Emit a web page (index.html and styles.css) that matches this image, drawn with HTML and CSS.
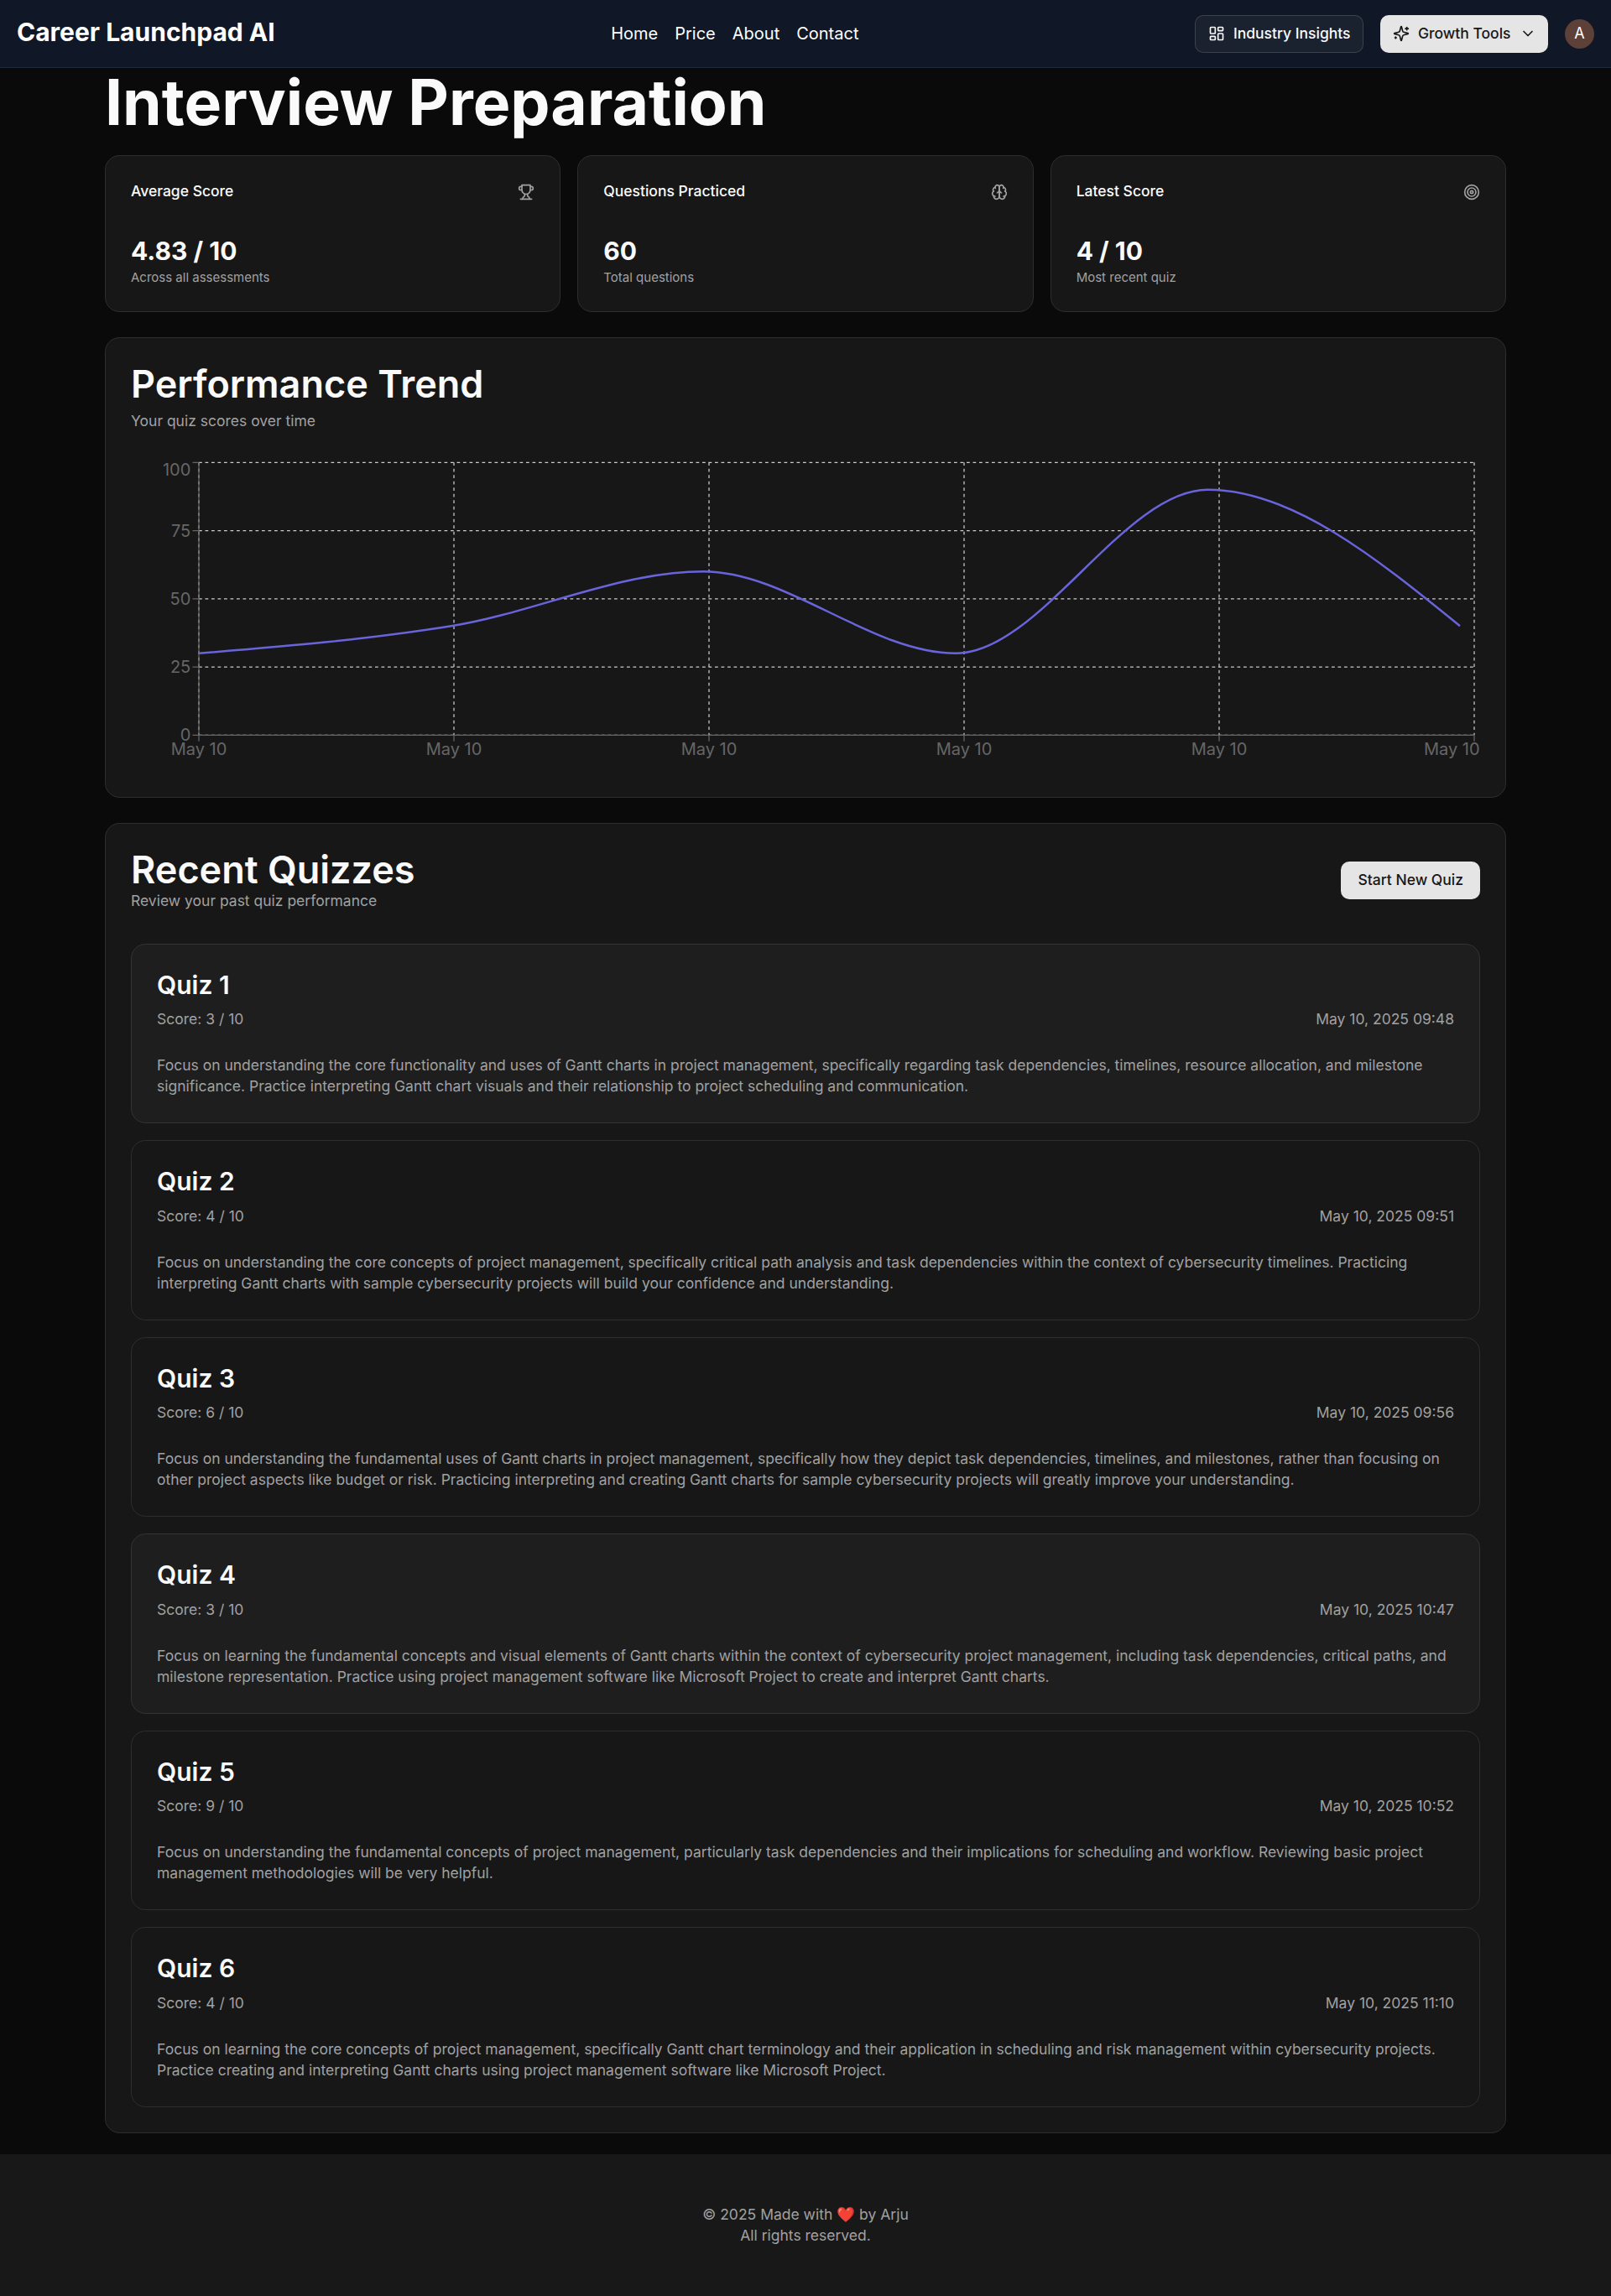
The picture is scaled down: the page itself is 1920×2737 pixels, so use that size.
FILE: index.html
```html
<!DOCTYPE html>
<html lang="en">
<head>
<meta charset="utf-8">
<title>Career Launchpad AI</title>
<link rel="stylesheet" href="styles.css">
</head>
<body>
<header class="topbar">
  <a class="brand">Career Launchpad AI</a>
  <nav class="links"><a>Home</a><a>Price</a><a>About</a><a>Contact</a></nav>
  <div class="actions">
    <button class="btn btn-outline">
      <svg class="icon" viewBox="0 0 24 24"><rect width="7" height="9" x="3" y="3" rx="1"/><rect width="7" height="5" x="14" y="3" rx="1"/><rect width="7" height="9" x="14" y="12" rx="1"/><rect width="7" height="5" x="3" y="16" rx="1"/></svg>
      <span>Industry Insights</span>
    </button>
    <button class="btn btn-primary btn-icon">
      <svg class="icon" viewBox="0 0 24 24"><path d="M9.937 15.5A2 2 0 0 0 8.5 14.063l-6.135-1.582a.5.5 0 0 1 0-.962L8.5 9.936A2 2 0 0 0 9.937 8.5l1.582-6.135a.5.5 0 0 1 .963 0L14.063 8.5A2 2 0 0 0 15.5 9.937l6.135 1.581a.5.5 0 0 1 0 .964L15.5 14.063a2 2 0 0 0-1.437 1.437l-1.582 6.135a.5.5 0 0 1-.963 0z"/><path d="M20 3v4"/><path d="M22 5h-4"/><path d="M4 17v2"/><path d="M5 18H3"/></svg>
      <span>Growth Tools</span>
      <svg class="icon" viewBox="0 0 24 24"><path d="m6 9 6 6 6-6"/></svg>
    </button>
    <span class="avatar">A</span>
  </div>
</header>

<main class="page">
  <h1 class="page-title">Interview Preparation</h1>

  <section class="stats">
    <article class="card">
      <div class="stat-head"><h3 class="stat-label">Average Score</h3>
        <svg class="icon" viewBox="0 0 24 24"><path d="M6 9H4.5a2.5 2.5 0 0 1 0-5H6"/><path d="M18 9h1.5a2.5 2.5 0 0 0 0-5H18"/><path d="M4 22h16"/><path d="M10 14.66V17c0 .55-.47.98-.97 1.21C7.85 18.75 7 20.24 7 22"/><path d="M14 14.66V17c0 .55.47.98.97 1.21C16.15 18.75 17 20.24 17 22"/><path d="M18 2H6v7a6 6 0 0 0 12 0V2Z"/></svg></div>
      <div><div class="stat-value">4.83 / 10</div><p class="stat-note">Across all assessments</p></div>
    </article>
    <article class="card">
      <div class="stat-head"><h3 class="stat-label">Questions Practiced</h3>
        <svg class="icon" viewBox="0 0 24 24"><path d="M12 5a3 3 0 1 0-5.997.125 4 4 0 0 0-2.526 5.77 4 4 0 0 0 .556 6.588A4 4 0 1 0 12 18Z"/><path d="M12 5a3 3 0 1 1 5.997.125 4 4 0 0 1 2.526 5.77 4 4 0 0 1-.556 6.588A4 4 0 1 1 12 18Z"/><path d="M15 13a4.5 4.5 0 0 1-3-4 4.5 4.5 0 0 1-3 4"/><path d="M17.599 6.5a3 3 0 0 0 .399-1.375"/><path d="M6.003 5.125A3 3 0 0 0 6.401 6.5"/><path d="M3.477 10.896a4 4 0 0 1 .585-.396"/><path d="M19.938 10.5a4 4 0 0 1 .585.396"/><path d="M6 18a4 4 0 0 1-1.967-.516"/><path d="M19.967 17.484A4 4 0 0 1 18 18"/></svg></div>
      <div><div class="stat-value">60</div><p class="stat-note">Total questions</p></div>
    </article>
    <article class="card">
      <div class="stat-head"><h3 class="stat-label">Latest Score</h3>
        <svg class="icon" viewBox="0 0 24 24"><circle cx="12" cy="12" r="10"/><circle cx="12" cy="12" r="6"/><circle cx="12" cy="12" r="2"/></svg></div>
      <div><div class="stat-value">4 / 10</div><p class="stat-note">Most recent quiz</p></div>
    </article>
  </section>

  <section class="card">
    <div class="card-head">
      <h2 class="card-title">Performance Trend</h2>
      <p class="muted">Your quiz scores over time</p>
    </div>
    <svg class="chart" viewBox="0 0 1608 375">
      <g class="grid">
        <path d="M81 331.25H1601M81 250H1601M81 168.75H1601M81 87.5H1601M81 6.25H1601"/>
        <path d="M81 6.25V331.25"/><path d="M385 6.25V331.25"/><path d="M689 6.25V331.25"/><path d="M993 6.25V331.25"/><path d="M1297 6.25V331.25"/><path d="M1601 6.25V331.25"/>
      </g>
      <g class="axis">
        <path d="M81 331.25H1601M81 331.25v7.5M385 331.25v7.5M689 331.25v7.5M993 331.25v7.5M1297 331.25v7.5M1601 331.25v7.5"/>
        <path d="M81 6.25V331.25M73.5 331.25h7.5M73.5 250h7.5M73.5 168.75h7.5M73.5 87.5h7.5M73.5 6.25h7.5"/>
      </g>
      <g class="tick tick-x">
        <text x="81" y="354.9">May 10</text><text x="385" y="354.9">May 10</text><text x="689" y="354.9">May 10</text><text x="993" y="354.9">May 10</text><text x="1297" y="354.9">May 10</text><text x="1574.3" y="354.9">May 10</text>
      </g>
      <g class="tick tick-y">
        <text x="71.25" y="337.9">0</text><text x="71.25" y="257.1">25</text><text x="71.25" y="175.9">50</text><text x="71.25" y="94.6">75</text><text x="71.25" y="21.8">100</text>
      </g>
      <path class="line" d="M81.25 233.75C181.43 225.63 281.62 217.5 381.8 201.25C481.98 185 582.17 136.25 682.35 136.25C782.53 136.25 882.72 233.75 982.9 233.75C1083.08 233.75 1183.27 38.75 1283.45 38.75C1383.63 38.75 1483.82 120 1584 201.25"/>
    </svg>
  </section>

  <section class="card recent">
    <div class="recent-head">
      <div><h2 class="card-title">Recent Quizzes</h2><p class="muted">Review your past quiz performance</p></div>
      <button class="btn btn-primary"><span>Start New Quiz</span></button>
    </div>
    <div class="quiz-list">
      <article class="card quiz active">
        <div class="quiz-head"><h3 class="quiz-title">Quiz 1</h3><div class="quiz-meta"><span>Score: 3 / 10</span><span>May 10, 2025 09:48</span></div></div>
        <p class="muted">Focus on understanding the core functionality and uses of Gantt charts in project management, specifically regarding task dependencies, timelines, resource allocation, and milestone significance. Practice interpreting Gantt chart visuals and their relationship to project scheduling and communication.</p>
      </article>
      <article class="card quiz">
        <div class="quiz-head"><h3 class="quiz-title">Quiz 2</h3><div class="quiz-meta"><span>Score: 4 / 10</span><span>May 10, 2025 09:51</span></div></div>
        <p class="muted">Focus on understanding the core concepts of project management, specifically critical path analysis and task dependencies within the context of cybersecurity timelines. Practicing interpreting Gantt charts with sample cybersecurity projects will build your confidence and understanding.</p>
      </article>
      <article class="card quiz">
        <div class="quiz-head"><h3 class="quiz-title">Quiz 3</h3><div class="quiz-meta"><span>Score: 6 / 10</span><span>May 10, 2025 09:56</span></div></div>
        <p class="muted">Focus on understanding the fundamental uses of Gantt charts in project management, specifically how they depict task dependencies, timelines, and milestones, rather than focusing on other project aspects like budget or risk. Practicing interpreting and creating Gantt charts for sample cybersecurity projects will greatly improve your understanding.</p>
      </article>
      <article class="card quiz active">
        <div class="quiz-head"><h3 class="quiz-title">Quiz 4</h3><div class="quiz-meta"><span>Score: 3 / 10</span><span>May 10, 2025 10:47</span></div></div>
        <p class="muted">Focus on learning the fundamental concepts and visual elements of Gantt charts within the context of cybersecurity project management, including task dependencies, critical paths, and milestone representation. Practice using project management software like Microsoft Project to create and interpret Gantt charts.</p>
      </article>
      <article class="card quiz">
        <div class="quiz-head"><h3 class="quiz-title">Quiz 5</h3><div class="quiz-meta"><span>Score: 9 / 10</span><span>May 10, 2025 10:52</span></div></div>
        <p class="muted">Focus on understanding the fundamental concepts of project management, particularly task dependencies and their implications for scheduling and workflow. Reviewing basic project management methodologies will be very helpful.</p>
      </article>
      <article class="card quiz">
        <div class="quiz-head"><h3 class="quiz-title">Quiz 6</h3><div class="quiz-meta"><span>Score: 4 / 10</span><span>May 10, 2025 11:10</span></div></div>
        <p class="muted">Focus on learning the core concepts of project management, specifically Gantt chart terminology and their application in scheduling and risk management within cybersecurity projects. Practice creating and interpreting Gantt charts using project management software like Microsoft Project.</p>
      </article>
    </div>
  </section>
</main>

<footer class="footer"><p>© 2025 Made with ❤️ by Arju</p><p>All rights reserved.</p></footer>
</body>
</html>
```

FILE: styles.css
```css
html { font-size: 20px; }
*, *::before, *::after { box-sizing: border-box; }
body, h1, h2, h3, p { margin: 0; }
body {
  font-family: Inter, "Liberation Sans", sans-serif;
  font-size: 1rem;
  line-height: 1.5;
  background: #0a0a0a;
  color: #fafafa;
}
button { font: inherit; color: inherit; border: 0; }

.topbar {
  display: flex;
  align-items: center;
  justify-content: space-between;
  height: 81px;
  padding: 0 1rem;
  background: #101726;
  border-bottom: 1px solid #1e2939;
}
.brand { font-size: 1.5rem; font-weight: 700; line-height: 2rem; padding-bottom: 5px; color: #fff; }
.links { display: flex; gap: 1rem; color: #fff; }
.actions { display: flex; align-items: center; gap: 1rem; }

.btn {
  display: inline-flex;
  align-items: center;
  gap: .5rem;
  height: 2.25rem;
  padding: 0 1rem;
  border-radius: .5rem;
  font-size: .875rem;
  font-weight: 500;
  line-height: 1.25rem;
  white-space: nowrap;
}
.btn span { padding-bottom: 2px; }
.btn-outline { padding: 0 .75rem; background: rgba(255,255,255,.045); border: 1px solid rgba(255,255,255,.15); }
.btn-primary { background: #e5e5e5; color: #171717; }
.btn-icon { padding: 0 14.5px; }
.icon {
  width: 1rem;
  height: 1rem;
  flex: none;
  fill: none;
  stroke: currentColor;
  stroke-width: 2;
  stroke-linecap: round;
  stroke-linejoin: round;
}
.avatar {
  display: grid;
  place-items: center;
  width: 1.75rem;
  height: 1.75rem;
  border-radius: 50%;
  background: #5d4037;
  color: #fff;
  font-size: .9rem;
  line-height: 1;
}

.page {
  display: flex;
  flex-direction: column;
  gap: 1.5rem;
  width: 1670px;
  margin: 0 auto;
  padding: 3px 0 25px;
}
.page-title { font-size: 3.75rem; font-weight: 700; line-height: 1; margin-bottom: -4px; }

.card {
  background: #171717;
  border: 1px solid #2e2e2e;
  border-radius: .875rem;
  padding: 1.5rem;
  display: flex;
  flex-direction: column;
  gap: 1.5rem;
}
.stats { display: grid; grid-template-columns: repeat(3, 1fr); gap: 1rem; }
.stat-head { display: flex; justify-content: space-between; align-items: center; padding-bottom: .5rem; color: #a1a1a1; }
.stat-label { margin: -1px 0 1px; font-size: .875rem; font-weight: 500; line-height: 1.25rem; color: #fafafa; }
.stat-value { margin: -2px 0 2px; font-size: 1.5rem; font-weight: 700; line-height: 2rem; }
.stat-note { font-size: .75rem; line-height: 1rem; color: #a1a1a1; }

.card-head { display: flex; flex-direction: column; gap: .375rem; }
.card-title { font-size: 2.25rem; font-weight: 600; line-height: 1.1; }
.muted { margin: -1px 0 1px; font-size: .875rem; line-height: 1.25rem; color: #a1a1a1; }

.chart { display: block; width: 100%; height: 375px; }
.grid { fill: none; stroke: #ccc; stroke-width: 1.25; stroke-dasharray: 3.75 3.75; }
.axis { fill: none; stroke: #666; stroke-width: 1.25; }
.tick { fill: #666; font-size: 20px; }
.tick-x { text-anchor: middle; }
.tick-y { text-anchor: end; }
.line { fill: none; stroke: #6a64dc; stroke-width: 2.5; }

.recent { gap: 38px; }
.recent-head { display: flex; align-items: center; justify-content: space-between; }
.quiz-list { display: flex; flex-direction: column; gap: 1rem; }
.quiz.active { background: #1e1e1e; border-color: #343434; }
.quiz-head { display: flex; flex-direction: column; gap: .375rem; }
.quiz-title { margin: -2px 0 2px; font-size: 1.5rem; font-weight: 600; line-height: 2rem; }
.quiz-meta { display: flex; justify-content: space-between; margin: -1px 0 1px; font-size: .875rem; line-height: 1.25rem; color: #a1a1a1; }

.footer {
  padding: 59px 0 60px;
  text-align: center;
  font-size: .875rem;
  line-height: 1.25rem;
  color: #a1a1a1;
  background: #181818;
}
```
